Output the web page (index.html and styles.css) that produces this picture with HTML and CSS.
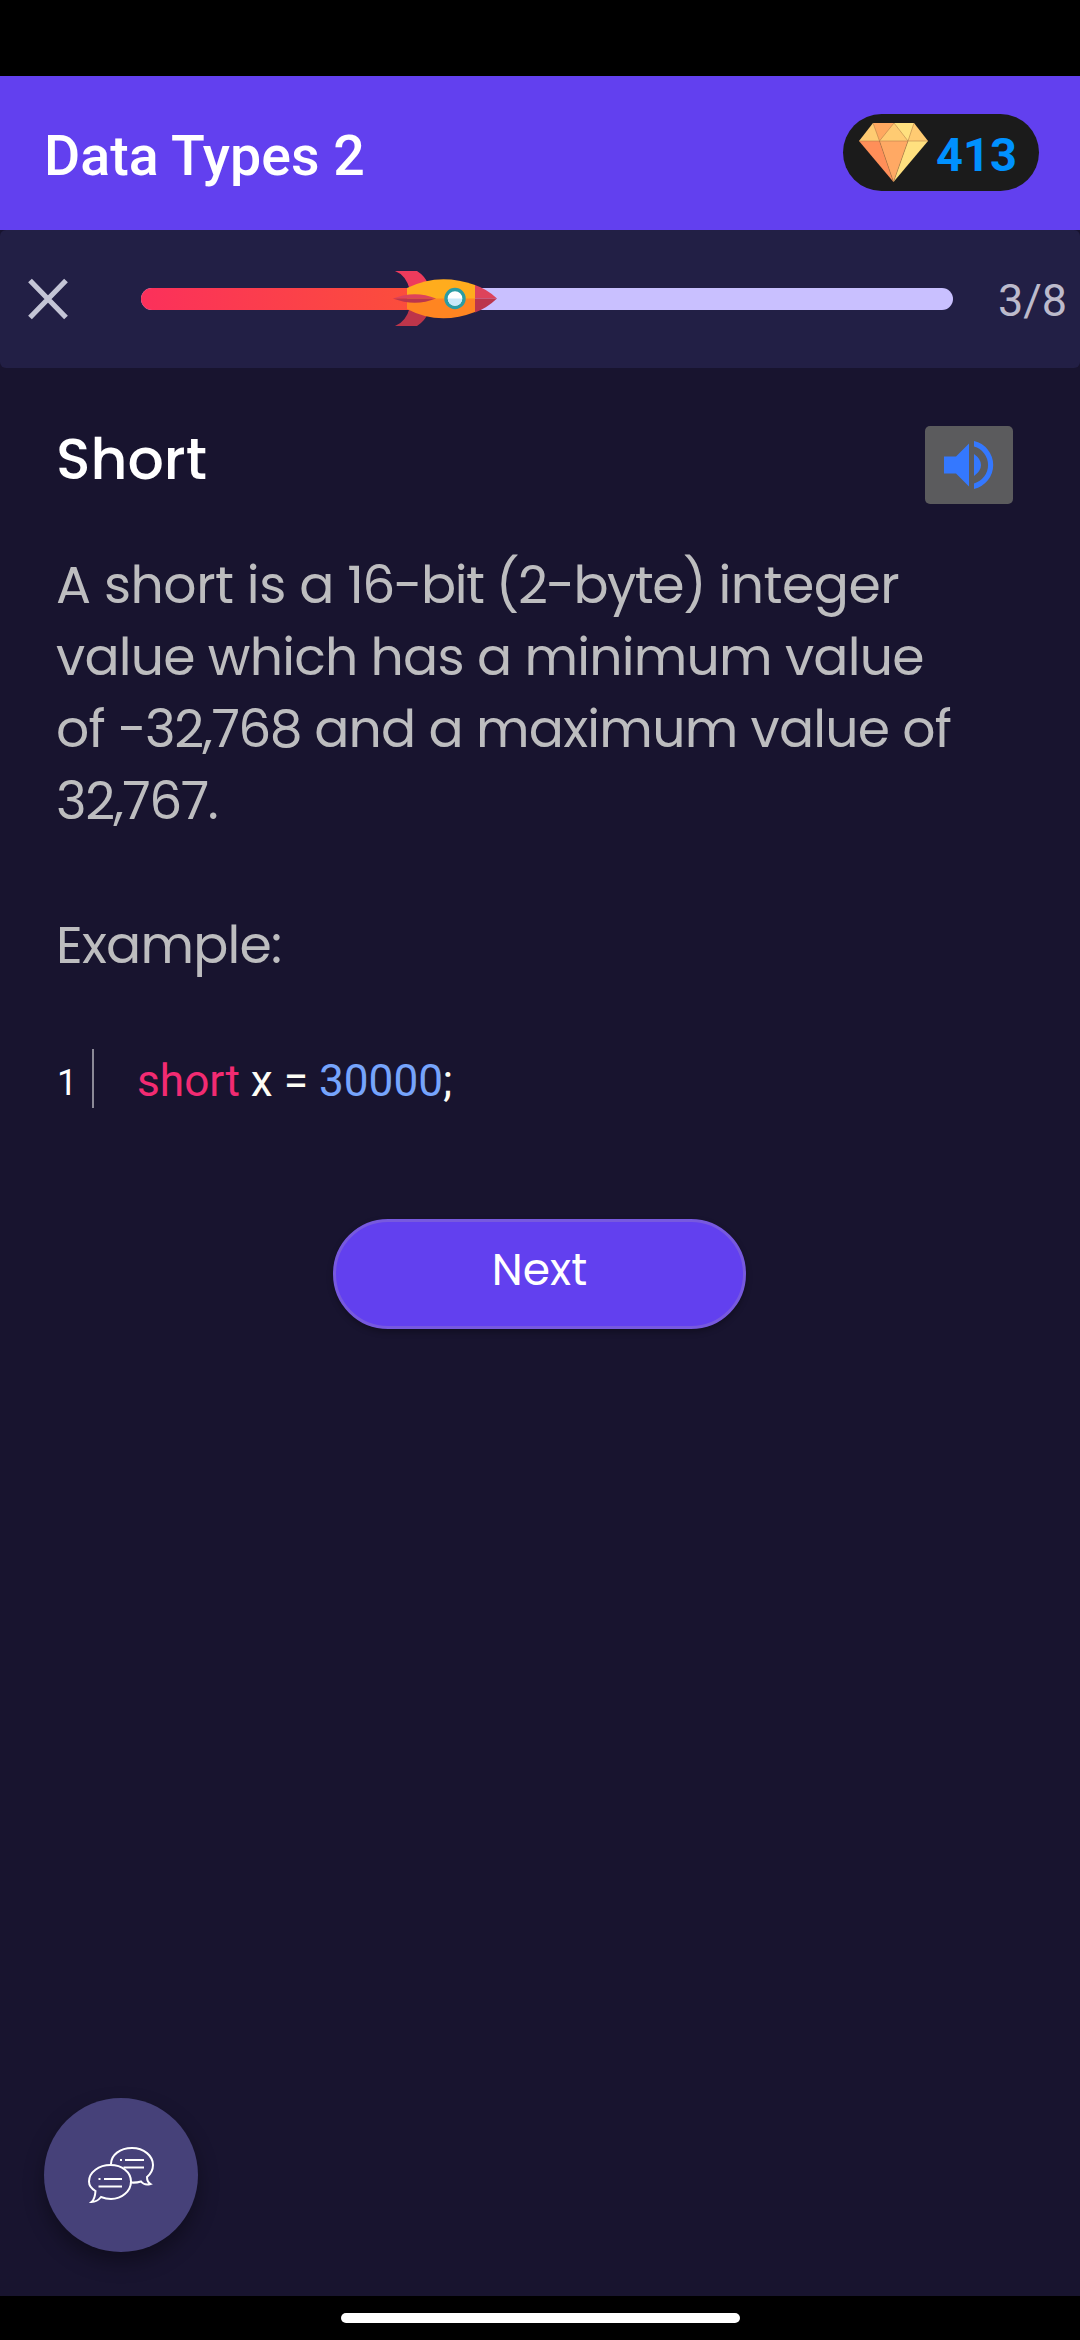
FILE: index.html
```html
<!DOCTYPE html>
<html lang="en">
<head>
<meta charset="utf-8">
<title>Data Types 2</title>
<link rel="stylesheet" href="styles.css">
</head>
<body>
<div class="status-bar"></div>
<header class="app-bar">
  <h1 class="app-title">Data Types 2</h1>
  <div class="gems">
    <svg class="gem-icon" viewBox="0 0 69 59">
      <path fill="#ffcb72" d="M14 0H55L69 18H0Z"/>
      <path fill="#ffa860" d="M14 0H35L20.500 18Z"/>
      <path fill="#ffe07f" d="M35 0H55L49 18Z"/>
      <path fill="#ff8f59" d="M0 18H20.500L34.500 59Z"/>
      <path fill="#ffa964" d="M20.500 18H49L34.500 59Z"/>
      <path fill="#ffe07f" d="M49 18H69L34.500 59Z"/>
      <path fill="none" stroke="#a87545" stroke-width=".5" d="M14 0L20.500 18L34.500 59L49 18L55 0M0 18H69M20.500 18L35 0L49 18"/>
    </svg>
    <span class="gem-count">413</span>
  </div>
</header>
<section class="progress-card">
  <svg class="close" viewBox="0 0 40 42"><path d="M2 2.500L38 39.500M38 2.500L2 39.500" stroke="#c4c5d6" stroke-width="5.200"/></svg>
  <div class="track">
    <div class="fill"></div>
    <svg class="rocket" viewBox="0 0 104 56">
      <path fill="#ee3b5c" d="M2 0H24Q32 5 35 13L17 19Q13 4 2 0Z"/>
      <path fill="#bd354a" d="M2 55H24Q32 50 35 42L17 36Q13 51 2 55Z"/>
      <path fill="#ffac1d" d="M14 17Q46 1 82 14V28H14Z"/>
      <path fill="#ff8521" d="M14 38Q46 55 82 41V27.500H14Z"/>
      <path fill="#dd435b" d="M82 14Q94 18 104 27.500H82Z"/>
      <path fill="#bb354c" d="M82 41.500Q94 37 104 27.500H82Z"/>
      <path fill="#dd435b" d="M0 27.500Q22 19 43 27.500Z"/>
      <path fill="#bb354c" d="M0 27.500Q22 36 43 27.500Z"/>
      <circle cx="62" cy="27.500" r="9" fill="#fff" stroke="#2a9ca3" stroke-width="3.400"/>
      <path fill="#c9e9f9" d="M54.700 27.500A7.300 7.300 0 0 0 69.300 27.500Z"/>
    </svg>
  </div>
  <span class="step">3/8</span>
</section>
<main class="lesson">
  <div class="lesson-head">
    <h2 class="lesson-title">Short</h2>
    <button class="sound" aria-label="Play audio">
      <svg viewBox="0 0 50 48"><path fill="#3478ff" d="M0 15.500H12L25 2.500V45.500L12 32.500H0ZM30 13Q37 18 37 24T30 35ZM30 0A24.600 24.600 0 0 1 30 48V42.500A19.200 19.200 0 0 0 30 5.500Z"/></svg>
    </button>
  </div>
  <p class="copy">
    <span class="line l1">A short is a <span class="tight">16-bit (2-byte)</span> integer</span>
    <span class="line">value which has a minimum value</span>
    <span class="line">of <span class="tight">-32,768</span> and a maximum value of</span>
    <span class="line tight">32,767.</span>
  </p>
  <p class="copy example"><span class="line">Example:</span></p>
  <div class="code">
    <span class="line-no">1</span>
    <code><span class="kw">short</span> x = <span class="num">30000</span>;</code>
  </div>
  <button class="next">Next</button>
</main>
<button class="chat" aria-label="Chat">
  <svg viewBox="0 0 66 56" fill="none" stroke="#fff" stroke-width="2">
    <path d="M23 17C23 8 32 1 44 1S65 9 65 18C65 24 62.500 27 59 30C59 33 60 35.500 62.500 37C58 38.500 55 37 53 34.500Q48 36 43 35.500"/>
    <path d="M22.500 18C34 18 43 25 43 34.500S34 52 23 52Q18 52 13 50Q9 55 3.500 55Q7 52 7.500 44C4 42 1 39 1 34.500C1 25 11 18 22.500 18Z"/>
    <path d="M32 13H34M37 13H56M35.500 20.500H56M10.500 32H12.500M16 32H34M10.500 39.500H34"/>
  </svg>
</button>
<footer class="nav-bar"><div class="home"></div></footer>
</body>
</html>
```
FILE: styles.css
```css
* { box-sizing: border-box; }
html, body { margin: 0; height: 100%; }
body {
  display: flex;
  flex-direction: column;
  width: 1080px;
  height: 2340px;
  overflow: hidden;
  background: #18142f;
  color: #fff;
  font-family: Roboto, sans-serif;
}
h1, h2, p { margin: 0; font-weight: 400; }
button { border: 0; padding: 0; color: inherit; }
svg { display: block; }

.status-bar { flex: none; height: 76px; background: #000; }

.app-bar {
  flex: none;
  display: flex;
  align-items: center;
  justify-content: space-between;
  height: 154px;
  padding: 0 41px 0 44px;
  background: #6240ef;
}
.app-title { padding-top: 8px; font-size: 55.500px; font-weight: 500; line-height: 64px; white-space: nowrap; }
.gems {
  display: flex;
  align-items: center;
  width: 196px;
  height: 77px;
  margin-bottom: 2px;
  padding-left: 16px;
  gap: 8px;
  border-radius: 39px;
  background: #1b1b1b;
}
.gem-icon { width: 69px; height: 59px; }
.gem-count { padding-top: 5px; color: #0091ff; font-size: 47px; font-weight: 700; line-height: 56px; }

.progress-card {
  flex: none;
  display: flex;
  align-items: center;
  height: 138px;
  padding-left: 28px;
  border-radius: 6px;
  background: #221f45;
}
.close { width: 40px; height: 42px; }
.track {
  position: relative;
  width: 812px;
  height: 22px;
  margin-left: 73px;
  border-radius: 11px;
  background: #c9c0ff;
}
.fill { width: 300px; height: 22px; border-radius: 11px 0 0 11px; background: linear-gradient(90deg, #fb305b, #fb5138); }
.rocket { position: absolute; left: 252px; top: -17px; width: 104px; height: 56px; }
.step { margin-left: 45px; padding-top: 4px; color: #bcbacb; font-size: 45px; line-height: 54px; }

.lesson { flex: 1; display: flex; flex-direction: column; padding: 58px 67px 0 56px; }
.lesson-head { display: flex; justify-content: space-between; height: 78px; }
.lesson-title, .copy, .next { font-family: Poppins, Inter, sans-serif; }
.lesson-title { font-size: 57px; font-weight: 500; line-height: 66px; }
.sound { display: grid; place-items: center; width: 88px; height: 78px; border-radius: 5px; background: #5b5b5d; }
.sound svg { width: 50px; height: 48px; }
.copy { margin-top: 45px; color: #bdbdbf; font-size: 52px; line-height: 72px; letter-spacing: -.78px; white-space: nowrap; }
.line { display: block; }
.l1 { letter-spacing: -.5px; }
.tight { letter-spacing: -1.500px; }
.example { margin-top: 72px; }
.code { display: flex; align-items: center; height: 59px; margin-top: 68px; }
.line-no { width: 38px; height: 59px; padding-left: 1px; border-right: 2px solid #8b8997; font-size: 36px; line-height: 69px; }
.code code { margin-left: 43px; padding-top: 6px; color: #fdfdf5; font: 44.200px/59px Roboto, sans-serif; white-space: pre; }
.code .kw { color: #f22b72; }
.code .num { color: #76a4fc; }
.next {
  width: 413px;
  height: 110px;
  margin: 111px 0 0 277px;
  padding-bottom: 9px;
  border: 3px solid #7759df;
  border-radius: 55px;
  background: #6240ef;
  box-shadow: 0 3px 6px rgba(0, 0, 0, .3);
  font-size: 44px;
}
.chat {
  flex: none;
  display: grid;
  place-items: center;
  width: 154px;
  height: 154px;
  margin: 0 0 44px 44px;
  border-radius: 50%;
  background: #464179;
  box-shadow: 0 10px 20px rgba(0, 0, 0, .35);
}
.chat svg { width: 66px; height: 56px; }
.nav-bar { flex: none; display: flex; justify-content: center; height: 44px; padding-top: 17px; background: #000; }
.home { width: 399px; height: 10px; border-radius: 5px; background: #fff; }
```
